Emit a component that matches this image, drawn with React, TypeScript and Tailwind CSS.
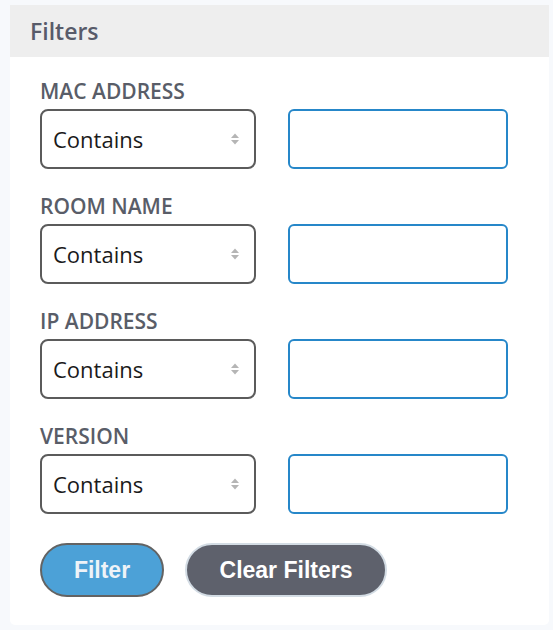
import React from "react";

const fields = ["MAC ADDRESS", "ROOM NAME", "IP ADDRESS", "VERSION"];

function Arrows() {
  return (
    <svg width="10" height="14" viewBox="0 0 10 14" className="absolute right-[14px] top-1/2 -translate-y-1/2">
      <path d="M1 6 L5 1.5 L9 6 Z" fill="#b5b5b5" />
      <path d="M1 8 L5 12.5 L9 8 Z" fill="#b5b5b5" />
    </svg>
  );
}

export default function App() {
  return (
    <div className="min-h-[630px] w-[553px] bg-[#f7f9fc] pt-[5px] pl-[10px]" style={{ fontFamily: '"Open Sans", sans-serif' }}>
      <div className="w-[539px] h-[620px] bg-white rounded-b-[5px] flex flex-col">
        <div className="h-[52px] bg-[#eeeeee] flex items-center pl-[20px]">
          <span className="text-[23px] text-[#585b6a] font-semibold">Filters</span>
        </div>
        <div className="pl-[30px] pt-[22px] flex flex-col gap-[25px]">
          {fields.map((f) => (
            <div key={f} className="flex flex-col gap-[6px]">
              <div className="h-[24px] leading-[24px] text-[21px] font-semibold text-[#595d68]">{f}</div>
              <div className="flex gap-[32px]">
                <div className="relative w-[216px] h-[60px] border-2 border-[#5b5b5b] rounded-[8px] flex items-center pl-[11px]">
                  <span className="text-[22px] text-[#1a1a1a]">Contains</span>
                  <Arrows />
                </div>
                <div className="w-[220px] h-[60px] border-2 border-[#2687c9] rounded-[6px]" />
              </div>
            </div>
          ))}
          <div className="flex gap-[21px] mt-[4px]">
            <button className="w-[124px] h-[54px] rounded-full bg-[#4ca1d7] border-2 border-[#636363] text-[#eef3f8] text-[23px] font-bold" style={{ fontFamily: '"Liberation Sans", Arial, sans-serif' }}>
              Filter
            </button>
            <button className="w-[202px] h-[54px] rounded-full bg-[#5e616c] border-2 border-[#d3dce4] text-white text-[23px] font-bold" style={{ fontFamily: '"Liberation Sans", Arial, sans-serif' }}>
              Clear Filters
            </button>
          </div>
        </div>
      </div>
    </div>
  );
}
